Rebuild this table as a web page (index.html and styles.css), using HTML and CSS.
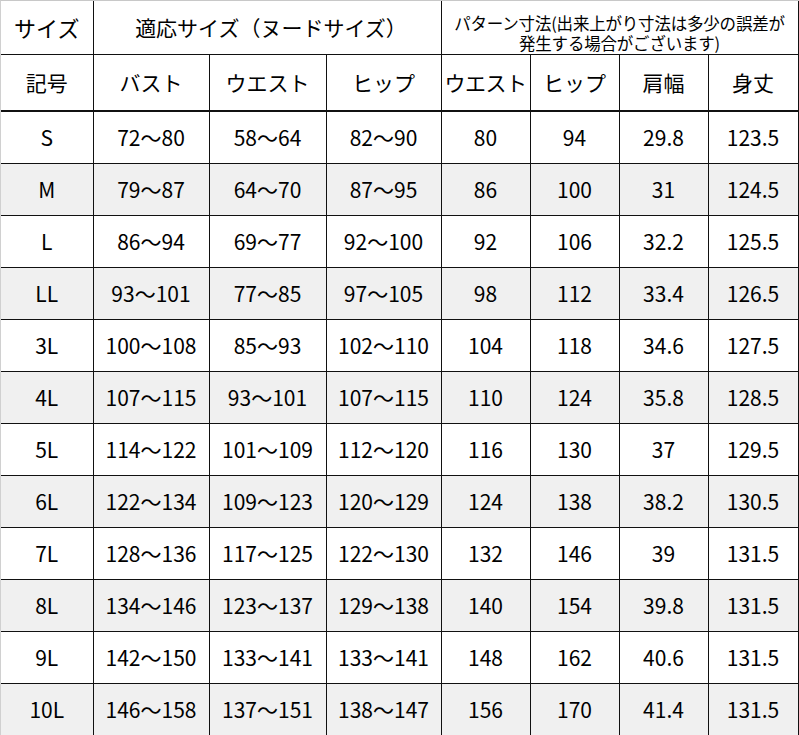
FILE: index.html
```html
<!DOCTYPE html>
<html lang="ja">
<head>
<meta charset="utf-8">
<link rel="stylesheet" href="styles.css">
</head>
<body>
<div class="frame">
<table class="size-table">
<colgroup>
<col class="c1"><col class="c2"><col class="c3"><col class="c4"><col class="c5"><col class="c6"><col class="c7"><col class="c8">
</colgroup>
<thead>
<tr class="h1">
<th>サイズ</th>
<th colspan="3" class="fit">適応サイズ（ヌードサイズ）</th>
<th colspan="4" class="note">パターン寸法(出来上がり寸法は多少の誤差が<br>発生する場合がございます)</th>
</tr>
<tr class="h2">
<th>記号</th><th>バスト</th><th>ウエスト</th><th>ヒップ</th><th class="tight">ウエスト</th><th>ヒップ</th><th>肩幅</th><th>身丈</th>
</tr>
</thead>
<tbody>
<tr><td>S</td><td>72～80</td><td>58～64</td><td>82～90</td><td>80</td><td>94</td><td>29.8</td><td>123.5</td></tr>
<tr class="alt"><td>M</td><td>79～87</td><td>64～70</td><td>87～95</td><td>86</td><td>100</td><td>31</td><td>124.5</td></tr>
<tr><td>L</td><td>86～94</td><td>69～77</td><td>92～100</td><td>92</td><td>106</td><td>32.2</td><td>125.5</td></tr>
<tr class="alt"><td>LL</td><td>93～101</td><td>77～85</td><td>97～105</td><td>98</td><td>112</td><td>33.4</td><td>126.5</td></tr>
<tr><td>3L</td><td>100～108</td><td>85～93</td><td>102～110</td><td>104</td><td>118</td><td>34.6</td><td>127.5</td></tr>
<tr class="alt"><td>4L</td><td>107～115</td><td>93～101</td><td>107～115</td><td>110</td><td>124</td><td>35.8</td><td>128.5</td></tr>
<tr><td>5L</td><td>114～122</td><td>101～109</td><td>112～120</td><td>116</td><td>130</td><td>37</td><td>129.5</td></tr>
<tr class="alt"><td>6L</td><td>122～134</td><td>109～123</td><td>120～129</td><td>124</td><td>138</td><td>38.2</td><td>130.5</td></tr>
<tr><td>7L</td><td>128～136</td><td>117～125</td><td>122～130</td><td>132</td><td>146</td><td>39</td><td>131.5</td></tr>
<tr class="alt"><td>8L</td><td>134～146</td><td>123～137</td><td>129～138</td><td>140</td><td>154</td><td>39.8</td><td>131.5</td></tr>
<tr><td>9L</td><td>142～150</td><td>133～141</td><td>133～141</td><td>148</td><td>162</td><td>40.6</td><td>131.5</td></tr>
<tr class="alt"><td>10L</td><td>146～158</td><td>137～151</td><td>138～147</td><td>156</td><td>170</td><td>41.4</td><td>131.5</td></tr>
</tbody>
</table>
</div>
</body>
</html>
```
FILE: styles.css
```css
html, body {
  margin: 0;
  padding: 0;
  background: #ffffff;
}
.frame {
  width: 797px;
  border-top: 1px solid #c8c8c8;
  border-left: 1px solid #d0d0d0;
  border-right: 1px solid #d0d0d0;
}
.size-table {
  border-collapse: collapse;
  table-layout: fixed;
  width: 797px;
  font-family: "Noto Sans CJK JP", "Liberation Sans", sans-serif;
  color: #000;
}
.c1 { width: 92px; }
.c2 { width: 116px; }
.c3 { width: 117px; }
.c4 { width: 115px; }
.c5 { width: 89px; }
.c6 { width: 89px; }
.c7 { width: 89px; }
.c8 { width: 90px; }
.size-table th,
.size-table td {
  border: 1px solid #111;
  padding: 0;
  text-align: center;
  vertical-align: middle;
  font-weight: normal;
  font-size: 21px;
  line-height: 1.2;
  white-space: nowrap;
  overflow: hidden;
}
.size-table th:first-child,
.size-table td:first-child {
  border-left: none;
}
.size-table .h1 th {
  border-top: none;
  height: 52px;
  font-size: 22px;
}
.size-table .h1 .fit {
  font-size: 21px;
  padding-left: 8px;
}
.size-table .h2 th {
  height: 55px;
  border-bottom: 2px solid #111;
}
.size-table td {
  height: 51px;
}
.size-table .h1 .note {
  font-size: 16.5px;
  line-height: 20px;
  vertical-align: bottom;
  padding-bottom: 1px;
  letter-spacing: -0.2px;
}
.size-table .tight {
  letter-spacing: -0.5px;
}
.alt td {
  background: #f0f0f0;
}
```
